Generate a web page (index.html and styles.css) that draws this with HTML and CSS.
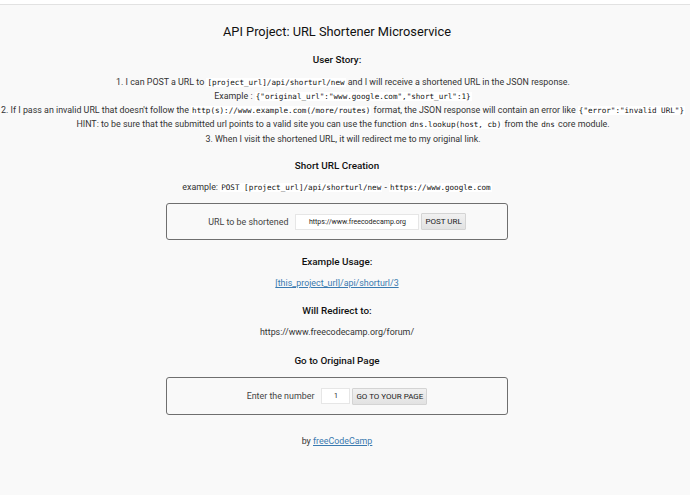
FILE: index.html
```html
<!DOCTYPE html>
<html>
<head>
<meta charset="utf-8">
<title>URL Shortener Microservice</title>
<link rel="stylesheet" href="styles.css">
</head>
<body>
<div class="topbar"></div>
<main class="page">
  <h1 class="title">API Project: URL Shortener Microservice</h1>
  <h3 class="sub sub-story">User Story:</h3>
  <ol class="story">
    <li>1. I can POST a URL to <code>[project_url]/api/shorturl/new</code> and I will receive a shortened URL in the JSON response.<br>Example : <code>{"original_url":"www.google.com","short_url":1}</code></li>
    <li>2. If I pass an invalid URL that doesn't follow the <code>http(s)://www.example.com(/more/routes)</code> format, the JSON response will contain an error like <code>{"error":"invalid URL"}</code><br>HINT: to be sure that the submitted url points to a valid site you can use the function <code>dns.lookup(host, cb)</code> from the <code>dns</code> core module.</li>
    <li class="third">3. When I visit the shortened URL, it will redirect me to my original link.</li>
  </ol>
  <h3 class="sub sub-create">Short URL Creation</h3>
  <p class="example">example: <code>POST [project_url]/api/shorturl/new</code> - <code>https://www.google.com</code></p>
  <form class="box box-create">
    <label class="lbl">URL to be shortened</label>
    <input class="field field-url" type="text" value="https://www.freecodecamp.org">
    <button class="btn" type="button">POST URL</button>
  </form>
  <h3 class="sub sub-usage">Example Usage:</h3>
  <p class="line"><a href="#" class="link">[this_project_url]/api/shorturl/3</a></p>
  <h3 class="sub sub-redirect">Will Redirect to:</h3>
  <p class="line">https://www.freecodecamp.org/forum/</p>
  <h3 class="sub sub-go">Go to Original Page</h3>
  <form class="box box-go">
    <label class="lbl">Enter the number</label>
    <input class="field field-num" type="text" value="1">
    <button class="btn" type="button">GO TO YOUR PAGE</button>
  </form>
  <p class="footer">by <a href="#" class="link">freeCodeCamp</a></p>
</main>
</body>
</html>
```

FILE: styles.css
```css
html, body {
  margin: 0;
  padding: 0;
  background: #f9f9f9;
}
body {
  font-family: Roboto, "Liberation Sans", sans-serif;
  color: #333;
  font-size: 8.9px;
  line-height: 14px;
  width: 690px;
  height: 495px;
  overflow: hidden;
}
.topbar {
  height: 4px;
  background: #fff;
  border-bottom: 1px solid #e2e2e2;
}
.page {
  width: 674px;
  text-align: center;
}
.title {
  margin: 18px 0 0;
  font-size: 12.8px;
  font-weight: 400;
  line-height: 18px;
  color: #111;
}
.sub {
  margin: 0;
  font-size: 9.9px;
  font-weight: 500;
  line-height: 16px;
  color: #111;
}
.sub-story { margin-top: 11px; }
.story {
  list-style: none;
  margin: 7px 0 0;
  padding: 0;
  width: 686px;
  white-space: nowrap;
}
.story li { margin: 0; line-height: 14px; }
.story .third { margin-top: 1px; }
code {
  font-family: "DejaVu Sans Mono", monospace;
  font-size: 7.6px;
  line-height: 0;
  background: #fff;
  color: #111;
  padding: 0 1px;
}
.sub-create { margin-top: 12px; }
.example { margin: 6px 0 0; }
.box {
  width: 342px;
  margin: 9px auto 0;
  border: 1px solid #6f6f6f;
  border-radius: 3px;
  display: flex;
  justify-content: center;
  align-items: center;
  box-sizing: border-box;
  height: 37px;
  color: #444;
}
.lbl {
  margin-right: 7px;
}
.field {
  height: 16px;
  box-sizing: border-box;
  border: 1px solid #e6e6e6;
  background: #fff;
  font-family: Roboto, "Liberation Sans", sans-serif;
  font-size: 7px;
  text-align: center;
  color: #222;
  padding: 0;
  margin: 0 2px 0 0;
  outline: none;
}
.field-url { width: 124px; }
.field-num { width: 29px; }
.btn {
  height: 17px;
  box-sizing: border-box;
  border: 1px solid #d4d4d4;
  background: linear-gradient(#f1f1f1, #e2e2e2);
  font-family: Roboto, "Liberation Sans", sans-serif;
  font-size: 8px;
  color: #222;
  padding: 0 3px;
  margin: 0;
  border-radius: 1px;
}
.sub-usage { margin-top: 14px; }
.line { margin: 6px 0 0; color: #333; }
.link { color: #3a7ab0; }
.sub-redirect { margin-top: 13px; }
.sub-go { margin-top: 14px; }
.box-go { margin-top: 8px; height: 38px; }
.footer { margin: 19px 0 0; color: #333; }
```
